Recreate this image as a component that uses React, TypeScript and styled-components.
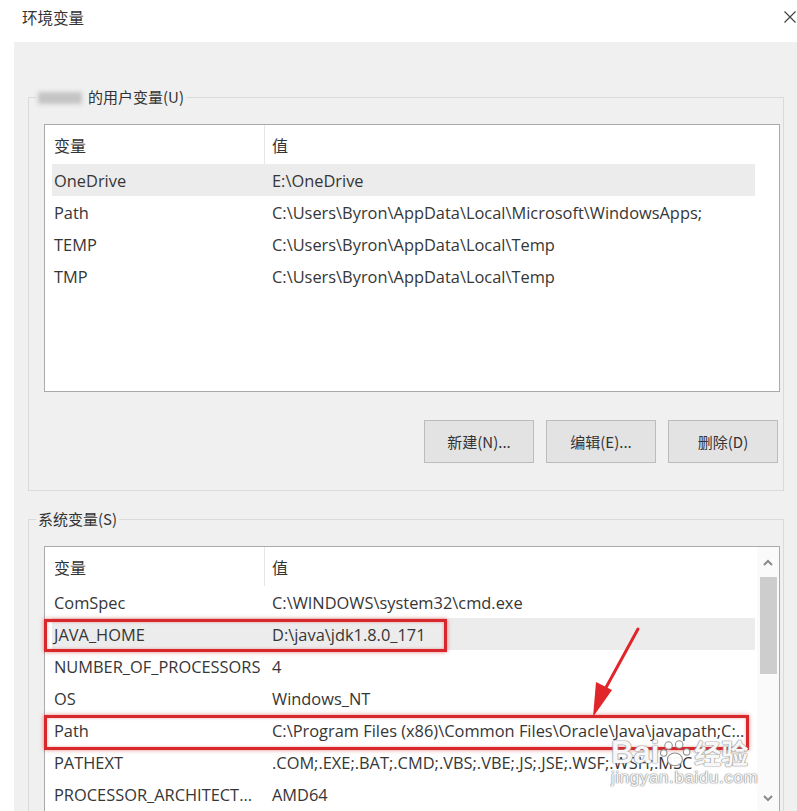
import React from 'react';
import styled, { createGlobalStyle } from 'styled-components';

const Global = createGlobalStyle`
  html, body { margin: 0; padding: 0; background: #ffffff; }
  body {
    font-family: "Open Sans", "Noto Sans CJK SC", sans-serif;
    color: #2e2e2e;
    -webkit-font-smoothing: antialiased;
  }
  * { box-sizing: border-box; }
`;

const Window = styled.div`
  width: 797px;
  height: 811px;
  overflow: hidden;
  background: #ffffff;
  display: flex;
  flex-direction: column;
`;

const TitleBar = styled.div`
  height: 42px;
  flex: none;
  display: flex;
  align-items: flex-start;
  justify-content: space-between;
  padding-left: 22px;
`;

const Title = styled.div`
  font-family: "Noto Sans CJK SC", sans-serif;
  font-size: 15.5px;
  line-height: 20px;
  margin-top: 7px;
  color: #333;
`;

const Close = styled.svg`
  margin-top: 11px;
  margin-right: 1px;
  width: 12px;
  height: 12px;
`;

const Panel = styled.div`
  flex: 1;
  margin-left: 14px;
  background: #f0f0f0;
  padding: 45px 13px 0 14px;
`;

const GroupBox = styled.fieldset<{ $gap?: number; $pb?: number }>`
  margin: ${p => p.$gap ?? 0}px 0 0 0;
  min-width: 0;
  border: 1px solid #dadada;
  padding: 17px 3px ${p => p.$pb ?? 0}px 15px;
`;

const Legend = styled.legend`
  margin-left: -8px;
  padding: 0 2px;
  font-family: "Noto Sans CJK SC", sans-serif;
  font-size: 15px;
  line-height: 20px;
  color: #333;
`;

const BlurName = styled.span`
  display: inline-block;
  width: 44px;
  height: 12px;
  margin-right: 6px;
  vertical-align: -1px;
  background: #c4c4c4;
  filter: blur(2px);
`;

const ListBox = styled.div<{ $h: number }>`
  position: relative;
  height: ${p => p.$h}px;
  background: #ffffff;
  border: 1px solid #aaaaaa;
  display: flex;
`;

const Rows = styled.div<{ $pr: number }>`
  flex: 1;
  padding-left: 7px;
  padding-right: ${p => p.$pr}px;
`;

const Header = styled.div`
  display: flex;
  height: 39px;
  font-family: "Noto Sans CJK SC", sans-serif;
  font-size: 16px;
  color: #333;
`;

const HeadCell = styled.div<{ $first?: boolean }>`
  display: flex;
  align-items: center;
  ${p =>
    p.$first
      ? 'width: 212px; padding-left: 2px;'
      : 'flex: 1; padding-left: 7px; border-left: 1px solid #e6e6e6;'}
`;

const Row = styled.div<{ $sel?: boolean }>`
  display: flex;
  align-items: center;
  height: 32px;
  font-size: 16.4px;
  white-space: nowrap;
  color: #363636;
  background: ${p => (p.$sel ? '#ececec' : 'transparent')};
`;

const Cell = styled.div<{ $first?: boolean }>`
  padding-left: 2px;
  overflow: hidden;
  ${p => (p.$first ? 'width: 218px; flex: none;' : 'flex: 1;')}
`;

const ButtonRow = styled.div`
  display: flex;
  justify-content: flex-end;
  gap: 12px;
  margin-top: 28px;
  padding-right: 2px;
`;

const Button = styled.button`
  width: 110px;
  height: 43px;
  background: #e3e3e3;
  border: 1px solid #bcbcbc;
  font-family: "Noto Sans CJK SC", sans-serif;
  font-size: 15px;
  color: #333;
  padding: 0;
`;

const Scrollbar = styled.div`
  width: 22px;
  flex: none;
  display: flex;
  flex-direction: column;
  align-items: center;
  background: #fafafa;
`;

const ArrowBox = styled.div`
  height: 30px;
  width: 100%;
  display: flex;
  align-items: center;
  justify-content: center;
`;

const Thumb = styled.div`
  width: 17px;
  height: 97px;
  background: #cdcdcd;
`;

const Track = styled.div`
  flex: 1;
`;

const Annotation = styled.div<{ $top: number; $w: number; $h: number }>`
  position: absolute;
  left: -1px;
  top: ${p => p.$top}px;
  width: ${p => p.$w}px;
  height: ${p => p.$h}px;
  border: 3px solid #d8282c;
  box-shadow: 0 0 4px rgba(200, 30, 30, 0.55), inset 0 0 3px rgba(200, 30, 30, 0.4);
  pointer-events: none;
`;

const Overlay = styled.svg`
  position: absolute;
  left: 0;
  top: 0;
  overflow: visible;
  pointer-events: none;
`;

const Watermark = styled.div`
  position: absolute;
  left: 566px;
  top: 190px;
  display: flex;
  flex-direction: column;
  align-items: flex-start;
  pointer-events: none;
  color: rgba(255, 255, 255, 0.95);
  text-shadow: 0 0 1px #8a8a8a, 0 0 1px #8a8a8a, 0 0 2px #aaa;
`;

const MarkTop = styled.div`
  display: flex;
  align-items: center;
  gap: 1px;
  font-family: "Liberation Sans", sans-serif;
  font-weight: bold;
  font-size: 31px;
  line-height: 32px;
`;

const MarkCn = styled.span`
  font-family: "Noto Sans CJK SC", sans-serif;
  font-weight: bold;
  font-size: 27px;
  margin-left: 1px;
`;

const MarkUrl = styled.div`
  font-family: "Liberation Sans", sans-serif;
  font-size: 17px;
  line-height: 18px;
  letter-spacing: 0.6px;
`;

const Chevron = ({ up }: { up?: boolean }) => (
  <svg width="10" height="7" viewBox="0 0 10 7">
    <polyline
      points={up ? '1,6 5,2 9,6' : '1,1 5,5 9,1'}
      fill="none"
      stroke="#8a8a8a"
      strokeWidth="2"
    />
  </svg>
);

const userVars = [
  ['OneDrive', 'E:\\OneDrive', true],
  ['Path', 'C:\\Users\\Byron\\AppData\\Local\\Microsoft\\WindowsApps;', false],
  ['TEMP', 'C:\\Users\\Byron\\AppData\\Local\\Temp', false],
  ['TMP', 'C:\\Users\\Byron\\AppData\\Local\\Temp', false],
] as const;

const sysVars = [
  ['ComSpec', 'C:\\WINDOWS\\system32\\cmd.exe', false],
  ['JAVA_HOME', 'D:\\java\\jdk1.8.0_171', true],
  ['NUMBER_OF_PROCESSORS', '4', false],
  ['OS', 'Windows_NT', false],
  ['Path', 'C:\\Program Files (x86)\\Common Files\\Oracle\\Java\\javapath;C:..', false],
  ['PATHEXT', '.COM;.EXE;.BAT;.CMD;.VBS;.VBE;.JS;.JSE;.WSF;.WSH;.MSC', false],
  ['PROCESSOR_ARCHITECT...', 'AMD64', false],
] as const;

export default function App() {
  return (
    <>
      <Global />
      <Window>
        <TitleBar>
          <Title>环境变量</Title>
          <Close viewBox="0 0 12 12">
            <path d="M0.5 0.5 L11.5 11.5 M11.5 0.5 L0.5 11.5" stroke="#444" strokeWidth="1.2" />
          </Close>
        </TitleBar>
        <Panel>
          <GroupBox $pb={27}>
            <Legend>
              <BlurName />
              的用户变量(U)
            </Legend>
            <ListBox $h={268}>
              <Rows $pr={24}>
                <Header>
                  <HeadCell $first>变量</HeadCell>
                  <HeadCell>值</HeadCell>
                </Header>
                {userVars.map(([k, v, sel]) => (
                  <Row key={k} $sel={sel}>
                    <Cell $first>{k}</Cell>
                    <Cell>{v}</Cell>
                  </Row>
                ))}
              </Rows>
            </ListBox>
            <ButtonRow>
              <Button>新建(N)...</Button>
              <Button>编辑(E)...</Button>
              <Button>删除(D)</Button>
            </ButtonRow>
          </GroupBox>
          <GroupBox $gap={18}>
            <Legend>系统变量(S)</Legend>
            <ListBox $h={268}>
              <Rows $pr={2}>
                <Header>
                  <HeadCell $first>变量</HeadCell>
                  <HeadCell>值</HeadCell>
                </Header>
                {sysVars.map(([k, v, sel]) => (
                  <Row key={k} $sel={sel}>
                    <Cell $first>{k}</Cell>
                    <Cell>{v}</Cell>
                  </Row>
                ))}
              </Rows>
              <Scrollbar>
                <ArrowBox>
                  <Chevron up />
                </ArrowBox>
                <Thumb />
                <Track />
                <ArrowBox>
                  <Chevron />
                </ArrowBox>
              </Scrollbar>
              <Annotation $top={72} $w={403} $h={33} />
              <Annotation $top={168} $w={705} $h={35} />
              <Watermark>
                <MarkTop>
                  Bai
                  <svg width="32" height="28" viewBox="0 0 30 26">
                    <g fill="rgba(255,255,255,0.95)" stroke="#909090" strokeWidth="1">
                      <circle cx="8" cy="6" r="3.5" />
                      <circle cx="18" cy="5" r="3.5" />
                      <circle cx="3.5" cy="13" r="3" />
                      <circle cx="25" cy="12" r="3" />
                      <ellipse cx="14" cy="19" rx="7" ry="6" />
                    </g>
                  </svg>
                  <MarkCn>经验</MarkCn>
                </MarkTop>
                <MarkUrl>jingyan.baidu.com</MarkUrl>
              </Watermark>
              <Overlay width="736" height="268">
                <line x1="593" y1="82" x2="558" y2="146" stroke="#e0262a" strokeWidth="3" strokeLinecap="round" />
                <polygon points="551,135 567,143 548,170" fill="#e0262a" />
              </Overlay>
            </ListBox>
          </GroupBox>
        </Panel>
      </Window>
    </>
  );
}
